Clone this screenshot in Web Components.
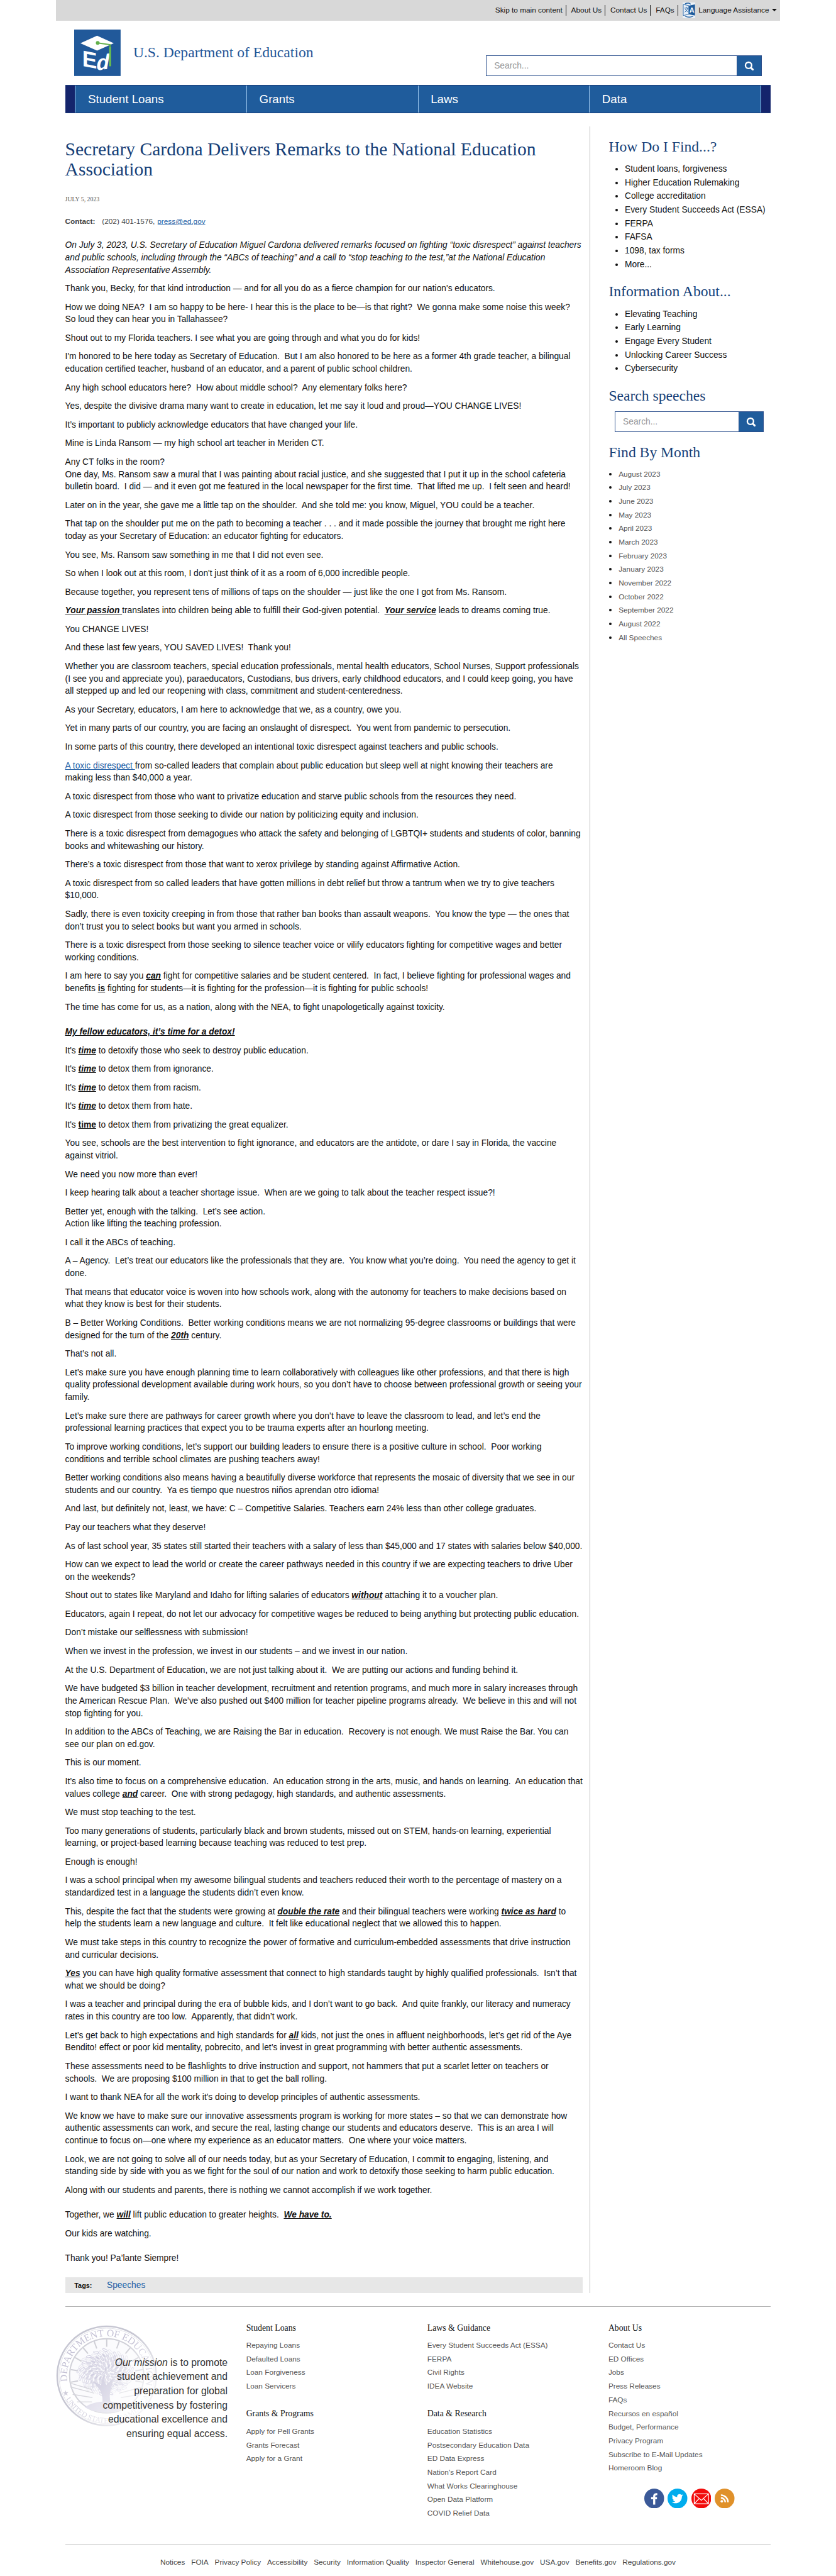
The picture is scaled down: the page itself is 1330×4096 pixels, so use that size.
<!DOCTYPE html>
<html lang="en">
<head>
<meta charset="utf-8">
<meta name="viewport" content="width=device-width, initial-scale=1">
<title>Secretary Cardona Delivers Remarks to the National Education Association</title>
<style>
  body {
    margin: 0;
    zoom: 0.985;
    background: #fff;
    color: #111;
    font: 14px/20px "Liberation Sans", Arial, sans-serif;
    --blue: #1f5c9c;
    --heading: #163f78;
    --link: #2360a5;
    --rule: #bcbcbc;
    --serif: "Liberation Serif", "Times New Roman", serif;
  }
  ed-speech a { color: var(--link); }
</style>
</head>
<body>
<ed-page>
  <ed-utility-bar slot="top"></ed-utility-bar>
  <ed-masthead slot="top"></ed-masthead>
  <ed-nav slot="top"></ed-nav>

  <ed-speech slot="main" heading="Secretary Cardona Delivers Remarks to the National Education Association" date="JULY 5, 2023" phone="(202) 401-1576," email="press@ed.gov" tag="Speeches">
<p><em>On July 3, 2023, U.S. Secretary of Education Miguel Cardona delivered remarks focused on fighting “toxic disrespect” against teachers and public schools, including through the “ABCs of teaching” and a call to “stop teaching to the test,”at the National Education Association Representative Assembly.</em></p>
<p>Thank you, Becky, for that kind introduction — and for all you do as a fierce champion for our nation's educators.</p>
<p>How we doing NEA?&nbsp; I am so happy to be here- I hear this is the place to be—is that right?&nbsp; We gonna make some noise this week?&nbsp; So loud they can hear you in Tallahassee?</p>
<p>Shout out to my Florida teachers. I see what you are going through and what you do for kids!</p>
<p>I'm honored to be here today as Secretary of Education.&nbsp; But I am also honored to be here as a former 4th grade teacher, a bilingual education certified teacher, husband of an educator, and a parent of public school children.</p>
<p>Any high school educators here?&nbsp; How about middle school?&nbsp; Any elementary folks here?</p>
<p>Yes, despite the divisive drama many want to create in education, let me say it loud and proud—YOU CHANGE LIVES!</p>
<p>It’s important to publicly acknowledge educators that have changed your life.</p>
<p>Mine is Linda Ransom — my high school art teacher in Meriden CT.</p>
<p>Any CT folks in the room?<br>One day, Ms. Ransom saw a mural that I was painting about racial justice, and she suggested that I put it up in the school cafeteria bulletin board.&nbsp; I did — and it even got me featured in the local newspaper for the first time.&nbsp; That lifted me up.&nbsp; I felt seen and heard!</p>
<p>Later on in the year, she gave me a little tap on the shoulder.&nbsp; And she told me: you know, Miguel, YOU could be a teacher.</p>
<p>That tap on the shoulder put me on the path to becoming a teacher . . . and it made possible the journey that brought me right here today as your Secretary of Education: an educator fighting for educators.</p>
<p>You see, Ms. Ransom saw something in me that I did not even see.</p>
<p>So when I look out at this room, I don't just think of it as a room of 6,000 incredible people.</p>
<p>Because together, you represent tens of millions of taps on the shoulder — just like the one I got from Ms. Ransom.</p>
<p><strong><em><u>Your passion </u></em></strong>translates into children being able to fulfill their God-given potential.&nbsp; <strong><em><u>Your service</u></em></strong> leads to dreams coming true.</p>
<p>You CHANGE LIVES!</p>
<p>And these last few years, YOU SAVED LIVES!&nbsp; Thank you!</p>
<p>Whether you are classroom teachers, special education professionals, mental health educators, School Nurses, Support professionals (I see you and appreciate you), paraeducators, Custodians, bus drivers, early childhood educators, and I could keep going, you have all stepped up and led our reopening with class, commitment and student-centeredness.</p>
<p>As your Secretary, educators, I am here to acknowledge that we, as a country, owe you.</p>
<p>Yet in many parts of our country, you are facing an onslaught of disrespect.&nbsp; You went from pandemic to persecution.</p>
<p>In some parts of this country, there developed an intentional toxic disrespect against teachers and public schools.</p>
<p><a href="#toxic">A toxic disrespect </a>from so-called leaders that complain about public education but sleep well at night knowing their teachers are making less than $40,000 a year.</p>
<p>A toxic disrespect from those who want to privatize education and starve public schools from the resources they need.</p>
<p>A toxic disrespect from those seeking to divide our nation by politicizing equity and inclusion.</p>
<p>There is a toxic disrespect from demagogues who attack the safety and belonging of LGBTQI+ students and students of color, banning books and whitewashing our history.</p>
<p>There’s a toxic disrespect from those that want to xerox privilege by standing against Affirmative Action.</p>
<p>A toxic disrespect from so called leaders that have gotten millions in debt relief but throw a tantrum when we try to give teachers $10,000.</p>
<p>Sadly, there is even toxicity creeping in from those that rather ban books than assault weapons.&nbsp; You know the type — the ones that don’t trust you to select books but want you armed in schools.</p>
<p>There is a toxic disrespect from those seeking to silence teacher voice or vilify educators fighting for competitive wages and better working conditions.</p>
<p>I am here to say you <strong><em><u>can</u></em></strong> fight for competitive salaries and be student centered.&nbsp; In fact, I believe fighting for professional wages and benefits <strong><u>is</u></strong> fighting for students—it is fighting for the profession—it is fighting for public schools!</p>
<p>The time has come for us, as a nation, along with the NEA, to fight unapologetically against toxicity.</p>
<p class="gap"><strong><em><u>My fellow educators, it’s time for a detox!</u></em></strong></p>
<p>It's <strong><em><u>time</u></em></strong> to detoxify those who seek to destroy public education.</p>
<p>It's <strong><em><u>time</u></em></strong> to detox them from ignorance.</p>
<p>It's <strong><em><u>time</u></em></strong> to detox them from racism.</p>
<p>It's <strong><em><u>time</u></em></strong> to detox them from hate.</p>
<p>It's <strong><u>time</u></strong> to detox them from privatizing the great equalizer.</p>
<p>You see, schools are the best intervention to fight ignorance, and educators are the antidote, or dare I say in Florida, the vaccine against vitriol.</p>
<p>We need you now more than ever!</p>
<p>I keep hearing talk about a teacher shortage issue.&nbsp; When are we going to talk about the teacher respect issue?!</p>
<p>Better yet, enough with the talking.&nbsp; Let’s see action.<br>Action like lifting the teaching profession.</p>
<p>I call it the ABCs of teaching.</p>
<p>A – Agency.&nbsp; Let’s treat our educators like the professionals that they are.&nbsp; You know what you’re doing.&nbsp; You need the agency to get it done.</p>
<p>That means that educator voice is woven into how schools work, along with the autonomy for teachers to make decisions based on what they know is best for their students.</p>
<p>B – Better Working Conditions.&nbsp; Better working conditions means we are not normalizing 95-degree classrooms or buildings that were designed for the turn of the <strong><em><u>20th</u></em></strong> century.</p>
<p>That’s not all.</p>
<p>Let’s make sure you have enough planning time to learn collaboratively with colleagues like other professions, and that there is high quality professional development available during work hours, so you don’t have to choose between professional growth or seeing your family.</p>
<p>Let’s make sure there are pathways for career growth where you don’t have to leave the classroom to lead, and let’s end the professional learning practices that expect you to be trauma experts after an hourlong meeting.</p>
<p>To improve working conditions, let’s support our building leaders to ensure there is a positive culture in school.&nbsp; Poor working conditions and terrible school climates are pushing teachers away!</p>
<p>Better working conditions also means having a beautifully diverse workforce that represents the mosaic of diversity that we see in our students and our country.&nbsp; Ya es tiempo que nuestros niños aprendan otro idioma!</p>
<p>And last, but definitely not, least, we have: C – Competitive Salaries. Teachers earn 24% less than other college graduates.</p>
<p>Pay our teachers what they deserve!</p>
<p>As of last school year, 35 states still started their teachers with a salary of less than $45,000 and 17 states with salaries below $40,000.</p>
<p>How can we expect to lead the world or create the career pathways needed in this country if we are expecting teachers to drive Uber on the weekends?</p>
<p>Shout out to states like Maryland and Idaho for lifting salaries of educators <strong><em><u>without</u></em></strong> attaching it to a voucher plan.</p>
<p>Educators, again I repeat, do not let our advocacy for competitive wages be reduced to being anything but protecting public education.</p>
<p>Don’t mistake our selflessness with submission!</p>
<p>When we invest in the profession, we invest in our students – and we invest in our nation.</p>
<p>At the U.S. Department of Education, we are not just talking about it.&nbsp; We are putting our actions and funding behind it.</p>
<p>We have budgeted $3 billion in teacher development, recruitment and retention programs, and much more in salary increases through the American Rescue Plan.&nbsp; We’ve also pushed out $400 million for teacher pipeline programs already.&nbsp; We believe in this and will not stop fighting for you.</p>
<p>In addition to the ABCs of Teaching, we are Raising the Bar in education.&nbsp; Recovery is not enough. We must Raise the Bar. You can see our plan on ed.gov.</p>
<p>This is our moment.</p>
<p>It’s also time to focus on a comprehensive education.&nbsp; An education strong in the arts, music, and hands on learning.&nbsp; An education that values college <strong><em><u>and</u></em></strong> career.&nbsp; One with strong pedagogy, high standards, and authentic assessments.</p>
<p>We must stop teaching to the test.</p>
<p>Too many generations of students, particularly black and brown students, missed out on STEM, hands-on learning, experiential learning, or project-based learning because teaching was reduced to test prep.</p>
<p>Enough is enough!</p>
<p>I was a school principal when my awesome bilingual students and teachers reduced their worth to the percentage of mastery on a standardized test in a language the students didn’t even know.</p>
<p>This, despite the fact that the students were growing at <strong><em><u>double the rate</u></em></strong> and their bilingual teachers were working <strong><em><u>twice as hard</u></em></strong> to help the students learn a new language and culture.&nbsp; It felt like educational neglect that we allowed this to happen.</p>
<p>We must take steps in this country to recognize the power of formative and curriculum-embedded assessments that drive instruction and curricular decisions.</p>
<p><strong><em><u>Yes</u></em></strong> you can have high quality formative assessment that connect to high standards taught by highly qualified professionals.&nbsp; Isn’t that what we should be doing?</p>
<p>I was a teacher and principal during the era of bubble kids, and I don’t want to go back.&nbsp; And quite frankly, our literacy and numeracy rates in this country are too low.&nbsp; Apparently, that didn’t work.</p>
<p>Let’s get back to high expectations and high standards for <strong><em><u>all</u></em></strong> kids, not just the ones in affluent neighborhoods, let’s get rid of the Aye Bendito! effect or poor kid mentality, pobrecito, and let’s invest in great programming with better authentic assessments.</p>
<p>These assessments need to be flashlights to drive instruction and support, not hammers that put a scarlet letter on teachers or schools.&nbsp; We are proposing $100 million in that to get the ball rolling.</p>
<p>I want to thank NEA for all the work it's doing to develop principles of authentic assessments.</p>
<p>We know we have to make sure our innovative assessments program is working for more states – so that we can demonstrate how authentic assessments can work, and secure the real, lasting change our students and educators deserve.&nbsp; This is an area I will continue to focus on—one where my experience as an educator matters.&nbsp; One where your voice matters.</p>
<p>Look, we are not going to solve all of our needs today, but as your Secretary of Education, I commit to engaging, listening, and standing side by side with you as we fight for the soul of our nation and work to detoxify those seeking to harm public education.</p>
<p>Along with our students and parents, there is nothing we cannot accomplish if we work together.</p>
<p class="gap">Together, we <strong><em><u>will</u></em></strong> lift public education to greater heights.&nbsp; <strong><em><u>We have to.</u></em></strong></p>
<p>Our kids are watching.</p>
<p class="gap">Thank you! Pa’lante Siempre!</p>
  </ed-speech>

  <ed-side-list slot="side" heading="How Do I Find...?" items="Student loans, forgiveness|Higher Education Rulemaking|College accreditation|Every Student Succeeds Act (ESSA)|FERPA|FAFSA|1098, tax forms|More..."></ed-side-list>
  <ed-side-list slot="side" heading="Information About..." items="Elevating Teaching|Early Learning|Engage Every Student|Unlocking Career Success|Cybersecurity"></ed-side-list>
  <ed-side-search slot="side" heading="Search speeches"></ed-side-search>
  <ed-side-list slot="side" class="months" heading="Find By Month" items="August 2023|July 2023|June 2023|May 2023|April 2023|March 2023|February 2023|January 2023|November 2022|October 2022|September 2022|August 2022|All Speeches"></ed-side-list>

  <ed-footer slot="bottom"></ed-footer>
</ed-page>

<script>
  const define = (name, html, upgrade) => customElements.define(name, class extends HTMLElement {
    constructor() {
      super();
      const tpl = document.createElement('template');
      tpl.innerHTML = html;
      this.attachShadow({ mode: 'open' }).append(tpl.content.cloneNode(true));
    }
    connectedCallback() {
      if (upgrade && !this.ready) { this.ready = true; upgrade(this, this.shadowRoot); }
    }
  });

  const fillList = (host, list) => {
    for (const label of host.getAttribute('items').split('|')) {
      const li = document.createElement('li');
      const a = document.createElement('a');
      a.href = '#';
      a.textContent = label;
      li.append(a);
      list.append(li);
    }
  };

  /* Page frame: header, article with sidebar, footer */
  define('ed-page', `
    <style>
      :host { display: block; max-width: 1170px; margin: 0 auto; }
      main { display: flex; margin: 21px 15px 0; }
      .article { flex: 1; min-width: 0; border-right: 1px solid var(--rule); padding: 20px 11px 0 0; }
      aside { flex: 0 0 292px; box-sizing: border-box; padding: 20px 0 0 30px; }
    </style>
    <slot name="top"></slot>
    <main>
      <div class="article"><slot name="main"></slot></div>
      <aside><slot name="side"></slot></aside>
    </main>
    <slot name="bottom"></slot>`);

  /* Grey strip with service links */
  define('ed-utility-bar', `
    <style>
      :host { display: block; background: #d8d8d8; }
      nav { display: flex; justify-content: flex-end; height: 26px; padding: 8px 5px 0; font-size: 12px; line-height: 17px; }
      a { color: #111; text-decoration: none; padding: 0 5px 0 8px; border-right: 1px solid #111; height: 17px; }
      button { display: flex; align-items: center; gap: 5px; height: 17px; margin: 0; padding: 0 0 0 7px; border: 0; background: none; font: inherit; color: #111; }
      .lang { width: 21px; height: 25px; margin: -4px 0; }
      .caret { width: 8px; height: 4px; }
    </style>
    <nav aria-label="Services">
      <a href="#main">Skip to main content</a>
      <a href="#about">About Us</a>
      <a href="#contact">Contact Us</a>
      <a href="#faqs">FAQs</a>
      <button type="button">
        <svg class="lang" viewBox="0 0 21 25" aria-hidden="true">
          <rect width="21" height="25" fill="#edf3f9"/>
          <path d="M1 3l9 2v14l-9 2z" fill="#e6eef7" stroke="#2b68a8"/>
          <path d="M10 5l10-2v18l-10-2z" fill="#1f5c9c"/>
          <path d="M3 9h6M6 7v2M8 9c-.5 3-2 5-4.500 6.500M4 10c1 2 2.500 4 4.500 5" fill="none" stroke="#2b68a8"/>
          <text x="11" y="16" font-size="11" font-weight="bold" font-family="Liberation Sans, sans-serif" fill="#fff">A</text>
          <path d="M4 22c4 2 9 2 13 0M4 2c4-2 8-1 9 1" fill="none" stroke="#2b68a8" stroke-width="1.500"/>
        </svg>
        <span>Language Assistance</span>
        <svg class="caret" viewBox="0 0 8 4" aria-hidden="true"><path d="M0 0h8L4 4z" fill="#111"/></svg>
      </button>
    </nav>`);

  /* Search field with attached button */
  define('ed-search', `
    <style>
      :host { display: block; }
      form { display: flex; height: 34px; margin: 0; }
      input { flex: 1; min-width: 0; box-sizing: border-box; margin: 0; padding: 0 12px; border: 1px solid #2b4f8c; border-right: 0; border-radius: 0; background: #fff; color: #333; font: 14px "Liberation Sans", Arial, sans-serif; }
      input::placeholder { color: #999; opacity: 1; }
      button { width: 40px; margin: 0; padding: 0; border: 1px solid #2b4f8c; background: var(--blue); display: flex; align-items: center; justify-content: center; }
      svg { width: 16px; height: 16px; }
    </style>
    <form role="search">
      <input type="text" placeholder="Search..." aria-label="Search">
      <button type="submit" aria-label="Search">
        <svg viewBox="0 0 16 16" aria-hidden="true"><circle cx="7" cy="7" r="5" fill="none" stroke="#fff" stroke-width="2.400"/><path d="M10.800 10.800l3 3" stroke="#fff" stroke-width="3" stroke-linecap="round"/></svg>
      </button>
    </form>`);

  define('ed-masthead', `
    <style>
      :host { display: flex; align-items: center; gap: 20px; padding: 14px 30px; }
      svg { width: 75px; height: 75px; flex: none; }
      .brand { flex: 1; color: #1f5698; text-decoration: none; font: 24px/26px var(--serif); }
      ed-search { flex: 0 0 445px; align-self: flex-end; }
    </style>
    <svg viewBox="0 0 75 75" role="img" aria-label="ED logo">
      <rect width="75" height="75" fill="#21599a"/>
      <path d="M10 22L37 10l27 12-27 12z" fill="#fff"/>
      <g fill="#fff" font-family="Liberation Sans, Arial, sans-serif" font-weight="bold">
        <text x="13" y="56" font-size="36" transform="skewY(11)">E</text>
        <text x="36" y="71" font-size="34" font-style="italic" transform="skewY(-8)">d</text>
      </g>
      <path d="M38 21.500l20 3v35" fill="none" stroke="#62b04a" stroke-width="2"/>
      <path d="M56.500 28h3v31h-3z" fill="#6cc24a"/>
      <circle cx="38" cy="21.500" r="3" fill="#62b04a"/>
    </svg>
    <a class="brand" href="#home">U.S. Department of Education</a>
    <ed-search></ed-search>`);

  define('ed-nav', `
    <style>
      :host { display: block; padding: 0 15px; }
      nav { display: flex; height: 44px; padding: 0 16px; background: linear-gradient(90deg, #14246c 16px, var(--blue) 16px calc(100% - 16px), #14246c calc(100% - 16px)); border: solid #193d7a; border-width: 1px 0; }
      a { flex: 1; box-sizing: border-box; padding-left: 20px; border-left: 1px solid #9cc6ee; color: #fff; font-size: 19px; line-height: 44px; text-decoration: none; }
      a:last-child { border-right: 1px solid #9cc6ee; }
    </style>
    <nav aria-label="Main"><a href="#loans">Student Loans</a><a href="#grants">Grants</a><a href="#laws">Laws</a><a href="#data">Data</a></nav>`);

  define('ed-speech', `
    <style>
      :host { display: block; }
      h1 { margin: 0 0 25px; font: 30px/33px var(--serif); color: var(--heading); }
      .date { font: 10px/14px var(--serif); color: #555; margin-bottom: 19px; }
      .contact { display: flex; font-size: 12px; line-height: 20px; color: #444; margin-bottom: 18px; }
      .contact b { margin-right: 11px; }
      .contact a { color: var(--link); margin-left: 4px; }
      ::slotted(p) { margin: 0 0 10px; }
      ::slotted(p.gap) { padding-top: 10px; }
      .tags { display: flex; gap: 24px; margin-top: 20px; padding-left: 15px; background: #e7e7e7; line-height: 26px; }
      .tags b { font-size: 11px; line-height: 28px; height: 26px; }
      .tags a { color: var(--link); text-decoration: none; }
    </style>
    <h1></h1>
    <div class="date"></div>
    <div class="contact"><b>Contact:</b><span class="phone"></span><a class="mail"></a></div>
    <slot></slot>
    <div class="tags"><b>Tags:</b><a class="tag" href="#speeches"></a></div>`, (host, root) => {
      const put = (sel, attr) => { root.querySelector(sel).textContent = host.getAttribute(attr); };
      put('h1', 'heading'); put('.date', 'date'); put('.phone', 'phone'); put('.mail', 'email'); put('.tag', 'tag');
      root.querySelector('.mail').href = 'mailto:' + host.getAttribute('email');
    });

  const sideHeading = `h2 { margin: 0 0 12px; font: 24px/26px var(--serif); color: var(--heading); }`;

  define('ed-side-list', `
    <style>
      :host { display: block; margin-bottom: 20px; }
      ${sideHeading}
      ul { margin: 0; padding-left: 26px; line-height: 22px; }
      a { color: #111; text-decoration: none; }
      :host(.months) h2 { margin-bottom: 10px; }
      :host(.months) ul { padding-left: 16px; }
      :host(.months) a { font-size: 12px; line-height: 16px; color: #555; }
    </style>
    <h2></h2><ul></ul>`, (host, root) => {
      root.querySelector('h2').textContent = host.getAttribute('heading');
      fillList(host, root.querySelector('ul'));
    });

  define('ed-side-search', `
    <style>
      :host { display: block; margin-bottom: 20px; }
      ${sideHeading}
      ed-search { margin-left: 10px; width: 240px; }
    </style>
    <h2></h2><ed-search></ed-search>`, (host, root) => {
      root.querySelector('h2').textContent = host.getAttribute('heading');
    });

  define('ed-footer-list', `
    <style>
      :host { display: block; margin-bottom: 23px; }
      :host(:last-of-type) { margin-bottom: 0; }
      h3 { margin: 0 0 8px; font: 14px/20px var(--serif); color: #111; }
      ul { list-style: none; margin: 0; padding: 0; font-size: 12px; line-height: 22px; }
      a { color: #555; text-decoration: none; }
    </style>
    <h3></h3><ul></ul>`, (host, root) => {
      root.querySelector('h3').textContent = host.getAttribute('heading');
      fillList(host, root.querySelector('ul'));
    });

  /* Department seal, fading out towards the lower right */
  define('ed-seal', `
    <style>:host { display: block; } svg { display: block; width: 100%; height: 100%; }</style>
    <svg viewBox="0 0 164 164" aria-hidden="true">
      <defs>
        <linearGradient id="fade" x1="0.1" y1="0.1" x2="0.95" y2="0.8"><stop offset="0.45" stop-color="#fff"/><stop offset="1" stop-color="#fff" stop-opacity="0.1"/></linearGradient>
        <mask id="m"><rect width="164" height="164" fill="url(#fade)"/></mask>
        <path id="up" d="M18.600 90.900A64 64 0 1 1 142.100 103.900"/>
        <path id="down" d="M10.100 106.700A76 76 0 0 0 153.900 106.700"/>
      </defs>
      <g mask="url(#m)">
        <circle cx="82" cy="82" r="80" fill="none" stroke="#c6c6d2" stroke-width="2.500"/>
        <circle cx="82" cy="82" r="77" fill="none" stroke="#e2e2e8"/>
        <circle cx="82" cy="82" r="60" fill="#fbfbfd" stroke="#d0d0d8" stroke-width="2"/>
        <g fill="#c3c0d4" font-family="Liberation Serif, serif">
          <text font-size="16"><textPath href="#up">DEPARTMENT OF EDUCATION</textPath></text>
          <text font-size="12" fill="#cfcddb"><textPath href="#down">★ UNITED STATES OF AMERICA</textPath></text>
        </g>
        <g class="rays" stroke="#cfcfd6" stroke-width="2"></g>
        <g class="leaves"></g>
        <path d="M72 138c6-14 3-28-3-36l-10-12 14 7 2-14 6 14 12-12-4 18c-4 12-2 24 5 35z" fill="#d2d0e1"/>
        <path d="M47 133c12-13 58-13 70 0-20 11-50 11-70 0z" fill="#dddbe9"/>
        <path d="M24 100l38 10M27 112l32 5M34 124l24 0M140 100l-38 10M137 112l-32 5M24 94l34 10" stroke="#d6d6dc" fill="none" stroke-width="1.500"/>
      </g>
    </svg>`, (host, root) => {
      const ns = 'http://www.w3.org/2000/svg';
      const add = (parent, tag, attrs) => {
        const el = document.createElementNS(ns, tag);
        for (const k in attrs) el.setAttribute(k, attrs[k]);
        parent.append(el);
      };
      const rays = root.querySelector('.rays');
      for (let deg = 170; deg <= 370; deg += 20) {
        const a = deg * Math.PI / 180;
        add(rays, 'path', { d: `M${82 + 59 * Math.cos(a)} ${82 + 59 * Math.sin(a)}L${82 + 47 * Math.cos(a)} ${82 + 47 * Math.sin(a)}` });
      }
      const leaves = root.querySelector('.leaves');
      const tones = ['#d9d7e6', '#e8e7ef', '#d0cee0', '#e1e0ea'];
      for (let i = 0; i < 130; i++) {
        const a = i * 2.4, r = 3.9 * Math.sqrt(i);
        const x = 80 + r * Math.cos(a), y = 76 + 0.82 * r * Math.sin(a);
        add(leaves, 'ellipse', { cx: x, cy: y, rx: 4, ry: 1.6, fill: r > 34 ? 'none' : tones[i % 4], stroke: tones[(i + 1) % 4], transform: `rotate(${i * 137 % 180} ${x} ${y})` });
      }
    });

  define('ed-social', `
    <style>
      :host { display: flex; gap: 6px; }
      a, svg { display: block; width: 32px; height: 32px; }
    </style>
    <a href="#facebook" aria-label="Facebook"><svg viewBox="0 0 32 32"><circle cx="16" cy="16" r="16" fill="#3b5998"/><path d="M21 9h-1.500c-3 0-3.500 1.500-3.500 4V26M11 15.500h9.500" fill="none" stroke="#fff" stroke-width="3.400"/></svg></a>
    <a href="#twitter" aria-label="Twitter"><svg viewBox="0 0 32 32"><circle cx="16" cy="16" r="16" fill="#00aced"/><path d="M25 10.700c-.7.300-1.400.5-2.100.6.800-.5 1.300-1.200 1.600-2-.7.400-1.500.7-2.400.9a3.700 3.700 0 0 0-6.400 3.400c-3.100-.2-5.800-1.600-7.600-3.900-1 1.700-.5 3.900 1.100 5-.6 0-1.200-.2-1.700-.5 0 1.800 1.300 3.400 3 3.700-.5.200-1.100.2-1.700.1.500 1.500 1.800 2.500 3.500 2.600A7.500 7.500 0 0 1 7 22.100c5.500 3.500 16.100 1.600 16.200-9.500.7-.5 1.300-1.100 1.800-1.900z" fill="#fff"/></svg></a>
    <a href="#email" aria-label="E-mail"><svg viewBox="0 0 32 32"><circle cx="16" cy="16" r="16" fill="#f20c0c"/><g fill="none" stroke="#fff" stroke-width="1.200"><path d="M4.500 8.500h23v16h-23zM4.500 8.500L16 19 27.500 8.500M4.500 24.500l8-8.500M27.500 24.500l-8-8.500"/></g></svg></a>
    <a href="#rss" aria-label="RSS"><svg viewBox="0 0 32 32"><circle cx="16" cy="16" r="16" fill="#e0912a"/><circle cx="11.500" cy="20.500" r="2" fill="#fff"/><path d="M10 15a7 7 0 0 1 7 7M10 10.500A11.500 11.500 0 0 1 21.500 22" fill="none" stroke="#fff" stroke-width="2.400"/></svg></a>`);

  define('ed-footer', `
    <style>
      :host { display: block; margin: 21px 15px 0; }
      .columns { display: grid; grid-template-columns: repeat(4, 1fr); margin-right: -30px; padding: 24px 0 39px; }
      footer { border-top: 1px solid #b4b4b4; }
      .mission { position: relative; padding: 55px 30px 0 60px; }
      .mission p { position: relative; margin: 0; font-size: 16px; line-height: 23px; text-align: right; color: #333; }
      ed-seal { position: absolute; left: -15px; top: 6px; width: 164px; height: 164px; }
      ed-social { margin: 21px 0 0 58px; }
      .legal { display: flex; flex-wrap: wrap; justify-content: center; gap: 0 10px; border-top: 1px solid #b4b4b4; padding: 17px 0 8px; font-size: 12px; line-height: 22px; }
      .legal a { color: #444; text-decoration: none; }
    </style>
    <footer>
      <div class="columns">
        <div class="mission"><ed-seal></ed-seal><p><em>Our mission</em> is to promote student achievement and preparation for global competitiveness by fostering educational excellence and ensuring equal access.</p></div>
        <div>
          <ed-footer-list heading="Student Loans" items="Repaying Loans|Defaulted Loans|Loan Forgiveness|Loan Servicers"></ed-footer-list>
          <ed-footer-list heading="Grants &amp; Programs" items="Apply for Pell Grants|Grants Forecast|Apply for a Grant"></ed-footer-list>
        </div>
        <div>
          <ed-footer-list heading="Laws &amp; Guidance" items="Every Student Succeeds Act (ESSA)|FERPA|Civil Rights|IDEA Website"></ed-footer-list>
          <ed-footer-list heading="Data &amp; Research" items="Education Statistics|Postsecondary Education Data|ED Data Express|Nation's Report Card|What Works Clearinghouse|Open Data Platform|COVID Relief Data"></ed-footer-list>
        </div>
        <div>
          <ed-footer-list heading="About Us" items="Contact Us|ED Offices|Jobs|Press Releases|FAQs|Recursos en español|Budget, Performance|Privacy Program|Subscribe to E-Mail Updates|Homeroom Blog"></ed-footer-list>
          <ed-social></ed-social>
        </div>
      </div>
      <nav class="legal" aria-label="Legal"><a href="#">Notices</a><a href="#">FOIA</a><a href="#">Privacy Policy</a><a href="#">Accessibility</a><a href="#">Security</a><a href="#">Information Quality</a><a href="#">Inspector General</a><a href="#">Whitehouse.gov</a><a href="#">USA.gov</a><a href="#">Benefits.gov</a><a href="#">Regulations.gov</a></nav>
    </footer>`);
</script>
</body>
</html>
